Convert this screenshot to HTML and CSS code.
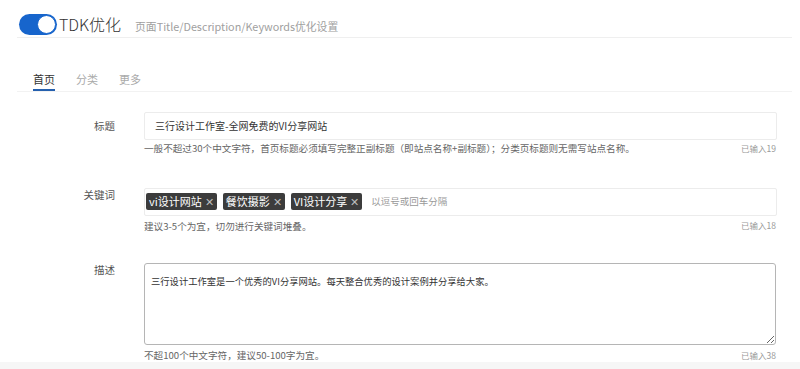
FILE: index.html
```html
<!DOCTYPE html>
<html lang="zh-CN">
<head>
<meta charset="utf-8">
<title>TDK优化</title>
<link rel="stylesheet" href="styles.css">
</head>
<body>
<div class="page">
  <header class="head">
    <span class="toggle"><span class="knob"></span></span>
    <h1 class="head-title">TDK优化</h1>
    <span class="head-sub">页面Title/Description/Keywords优化设置</span>
  </header>
  <nav class="tabs">
    <span class="tab active">首页</span>
    <span class="tab">分类</span>
    <span class="tab">更多</span>
  </nav>
  <div class="form">
    <div class="row row-title">
      <label class="label label-first">标题</label>
      <div class="field">
        <div class="input">三行设计工作室-全网免费的VI分享网站</div>
        <div class="meta">
          <span class="help">一般不超过30个中文字符，首页标题必须填写完整正副标题（即站点名称+副标题）；分类页标题则无需写站点名称。</span>
          <span class="count">已输入19</span>
        </div>
      </div>
    </div>
    <div class="row row-kw">
      <label class="label">关键词</label>
      <div class="field">
        <div class="input tags">
          <span class="tag">vi设计网站<span class="x">✕</span></span>
          <span class="tag">餐饮摄影<span class="x">✕</span></span>
          <span class="tag">VI设计分享<span class="x">✕</span></span>
          <span class="placeholder">以逗号或回车分隔</span>
        </div>
        <div class="meta meta-kw">
          <span class="help">建议3-5个为宜，切勿进行关键词堆叠。</span>
          <span class="count">已输入18</span>
        </div>
      </div>
    </div>
    <div class="row">
      <label class="label">描述</label>
      <div class="field">
        <textarea class="area" readonly>三行设计工作室是一个优秀的VI分享网站。每天整合优秀的设计案例并分享给大家。</textarea>
        <div class="meta meta-last">
          <span class="help">不超100个中文字符，建议50-100字为宜。</span>
          <span class="count">已输入38</span>
        </div>
      </div>
    </div>
  </div>
  <div class="bottom-band"></div>
</div>
</body>
</html>
```

FILE: styles.css
```css
* { box-sizing: border-box; }
html, body { margin: 0; padding: 0; background: #fff; }
body {
  font-family: "Noto Sans CJK SC", "Noto Sans", sans-serif;
  color: #333;
  width: 800px;
  height: 369px;
  overflow: hidden;
}
.page { position: relative; height: 369px; }

.head {
  margin: 0 8px 0 17px;
  padding: 13px 0 0 2px;
  height: 38px;
  display: flex;
  align-items: flex-start;
  border-bottom: 1px solid #efefef;
}
.toggle {
  width: 38px;
  height: 21px;
  border-radius: 11px;
  background: #1765cc;
  display: flex;
  justify-content: flex-end;
  align-items: center;
  padding: 0 1px;
  margin-top: 1px;
}
.knob {
  width: 19px;
  height: 19px;
  border-radius: 50%;
  background: #fff;
  border: 1.5px solid #1765cc;
}
.head-title {
  margin: 0 0 0 2px;
  font-size: 16px;
  font-weight: 300;
  line-height: 22px;
  color: #333;
}
.head-sub {
  margin-left: 14px;
  font-size: 10.8px;
  line-height: 22px;
  margin-top: 2px;
  color: #a0a0a0;
}

.tabs {
  margin: 33px 8px 0 17px;
  padding-left: 16px;
  display: flex;
  gap: 21px;
  border-bottom: 1px solid #f2f2f2;
}
.tab {
  font-size: 11px;
  line-height: 16px;
  padding-bottom: 2px;
  border-bottom: 2px solid transparent;
  color: #aaa;
}
.tab.active {
  color: #333;
  border-bottom-color: #2560ae;
}

.form {
  margin: 20px 0 0 0;
}
.row {
  display: flex;
}
.row-title { margin-bottom: 33px; }
.row-kw { margin-bottom: 30px; }
.label {
  width: 115px;
  text-align: right;
  font-size: 10.5px;
  line-height: 14px;
  color: #555;
  padding-top: 0;
}
.label-first { padding-top: 7px; }
.field {
  margin-left: 29px;
  width: 633px;
}
.input {
  height: 28px;
  border: 1px solid #ececec;
  border-radius: 2px;
  padding: 0 10px;
  font-size: 10px;
  line-height: 26px;
  color: #333;
}
.tags {
  display: flex;
  align-items: flex-start;
  gap: 6px;
  padding: 4px 1px 0;
}
.tag {
  height: 17px;
  background: #3c3c3c;
  color: #fff;
  border-radius: 2px;
  font-size: 11px;
  line-height: 17px;
  padding: 0 3px 0 3px;
  display: flex;
  align-items: center;
  gap: 3px;
}
.x {
  color: #bdbdbd;
  font-size: 11px;
  font-weight: 400;
}
.placeholder {
  margin-left: 3px;
  font-size: 9.5px;
  line-height: 17px;
  color: #999;
}
.meta {
  display: flex;
  justify-content: space-between;
  align-items: center;
  height: 14px;
  margin-top: 1px;
}
.meta-kw { margin-top: 3px; }
.help {
  font-size: 9.6px;
  color: #666;
  white-space: nowrap;
}
.count {
  font-size: 8.5px;
  color: #999;
  padding-right: 1px;
}
.meta-kw .count { margin-top: -3px; }
.area {
  display: block;
  width: 632px;
  height: 82px;
  margin: 0;
  border: 1px solid #b5b5b5;
  border-radius: 3px;
  padding: 10px 6px 6px;
  font-family: "Noto Sans CJK SC", "Noto Sans", sans-serif;
  font-size: 9.3px;
  line-height: 14px;
  color: #333;
  resize: vertical;
  outline: none;
}
.meta-last { margin-top: 3px; }
.bottom-band {
  position: absolute;
  left: 0;
  right: 0;
  top: 362px;
  bottom: 0;
  background: #f6f6f6;
}
```
